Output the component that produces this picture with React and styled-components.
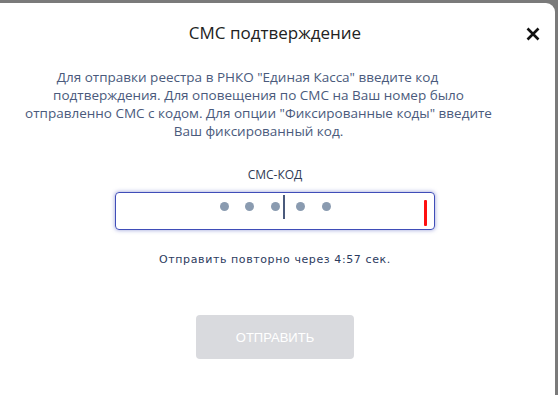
import React from "react";
import styled, { createGlobalStyle } from "styled-components";

const GlobalStyle = createGlobalStyle`
  html, body {
    margin: 0;
    padding: 0;
    background: #7a7a7a;
    height: 100%;
    overflow: hidden;
  }
`;

const Modal = styled.div`
  position: relative;
  box-sizing: border-box;
  margin-top: 3px;
  width: 555px;
  height: 392px;
  background: #fff;
  border-top-right-radius: 9px;
  display: flex;
  flex-direction: column;
  align-items: center;
  padding: 19px 5px 0 0;
  font-family: "Open Sans", "Noto Sans", sans-serif;
`;

const Title = styled.h2`
  margin: 0;
  font-size: 17px;
  line-height: 22px;
  font-weight: 500;
  color: #222;
`;

const Close = styled.button`
  position: absolute;
  top: 23px;
  right: 14px;
  width: 16px;
  height: 16px;
  padding: 0;
  border: none;
  background: none;
  cursor: pointer;
  display: flex;
  svg {
    width: 100%;
    height: 100%;
  }
`;

const Description = styled.p`
  margin: 24px 33px 0 0;
  font-size: 13.5px;
  line-height: 18px;
  color: #4a5a7c;
  text-align: center;
  white-space: nowrap;
`;

const Lead = styled.span`
  padding-right: 22px;
`;

const Label = styled.div`
  margin-top: 27px;
  font-size: 12px;
  line-height: 16px;
  color: #2f3a55;
`;

const CodeField = styled.div`
  position: relative;
  box-sizing: border-box;
  margin-top: 9px;
  width: 320px;
  height: 38px;
  border: 1px solid #3f4db8;
  border-radius: 4px;
  box-shadow: 0 0 4px rgba(63, 77, 184, 0.55);
  display: flex;
  align-items: center;
  justify-content: center;
  gap: 16.5px;
  padding-bottom: 10px;
`;

const Dot = styled.span`
  position: relative;
  width: 9px;
  height: 9px;
  border-radius: 50%;
  background: #8a9bb0;

  ${({ $caret }) =>
    $caret &&
    `
    &::after {
      content: "";
      position: absolute;
      left: 12px;
      top: -7px;
      width: 2px;
      height: 24px;
      background: #4a5a7c;
    }
  `}
`;

const ErrorMark = styled.span`
  position: absolute;
  right: 7px;
  top: 7px;
  width: 3px;
  height: 26px;
  border-radius: 1px;
  background: #ff1010;
`;

const Resend = styled.div`
  margin-top: 23px;
  font-family: "DejaVu Sans", sans-serif;
  font-size: 11px;
  line-height: 14px;
  letter-spacing: 0.6px;
  color: #2c3b5e;
`;

const SubmitButton = styled.button`
  margin-top: 48px;
  width: 158px;
  height: 44px;
  border: none;
  border-radius: 4px;
  background: #d9dade;
  color: #fff;
  font-family: "Liberation Sans", Arial, sans-serif;
  font-size: 13px;
  text-transform: uppercase;
  cursor: default;
`;

export default function App() {
  const filled = 5;
  const caretAfter = 3;

  return (
    <>
      <GlobalStyle />
      <Modal>
        <Title>СМС подтверждение</Title>
        <Close aria-label="Закрыть">
          <svg viewBox="0 0 16 16">
            <path d="M2.5 2.5 L13.5 13.5 M13.5 2.5 L2.5 13.5" stroke="#111" strokeWidth="2.6" />
          </svg>
        </Close>
        <Description>
          <Lead>Для отправки реестра в РНКО "Единая Касса" введите код</Lead>
          <br />
          подтверждения. Для оповещения по СМС на Ваш номер было
          <br />
          отправленно СМС с кодом. Для опции "Фиксированные коды" введите
          <br />
          Ваш фиксированный код.
        </Description>
        <Label>СМС-КОД</Label>
        <CodeField>
          {Array.from({ length: filled }, (_, i) => (
            <Dot key={i} $caret={i + 1 === caretAfter} />
          ))}
          <ErrorMark />
        </CodeField>
        <Resend>Отправить повторно через 4:57 сек.</Resend>
        <SubmitButton disabled>Отправить</SubmitButton>
      </Modal>
    </>
  );
}
